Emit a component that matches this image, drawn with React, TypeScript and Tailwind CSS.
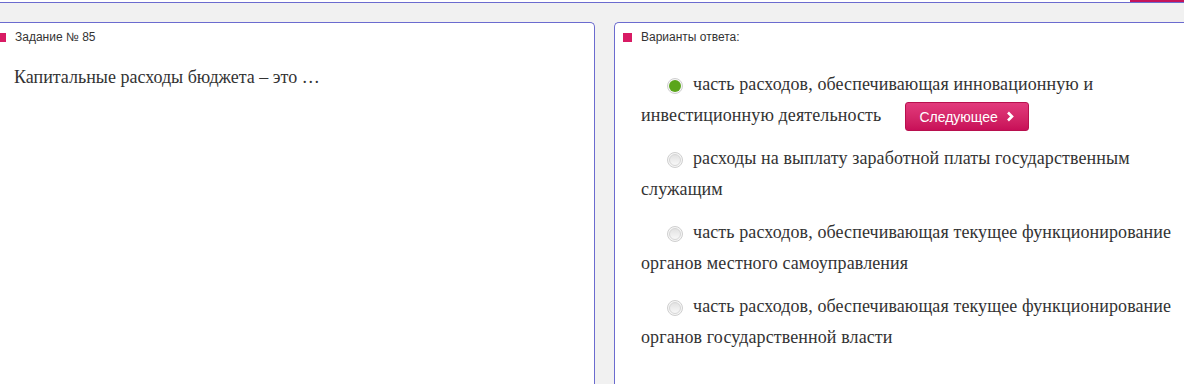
import React from 'react';

const options = [
  { text: 'часть расходов, обеспечивающая инновационную и инвестиционную деятельность', checked: true },
  { text: 'расходы на выплату заработной платы государственным служащим', checked: false },
  { text: 'часть расходов, обеспечивающая текущее функционирование органов местного самоуправления', checked: false },
  { text: 'часть расходов, обеспечивающая текущее функционирование органов государственной власти', checked: false },
];

function Radio({ checked }: { checked: boolean }) {
  return (
    <span className="inline-flex items-center justify-center align-[-2px] w-[16px] h-[16px] rounded-full border border-[#cfcfcf] bg-[#f6f6f6] ml-[26px] mr-[10px]">
      {checked ? (
        <span className="w-[12px] h-[12px] rounded-full bg-[#5aa51a]" />
      ) : (
        <span className="w-[12px] h-[12px] rounded-full bg-gradient-to-b from-[#e2e2e2] to-[#f8f8f8] border border-[#d6d6d6]" />
      )}
    </span>
  );
}

export default function App() {
  return (
    <div className="w-[1184px] h-[384px] overflow-hidden bg-[#f1f1f1] font-['Liberation_Sans',Arial,sans-serif]">
      {/* top strip */}
      <div className="flex h-[3px] border-b border-[#6b6bcf] bg-white">
        <div className="flex-1" />
        <div className="w-[54px] h-[2px] bg-[#c4145a]" />
      </div>
      <div className="h-[19px]" />

      <div className="flex gap-[19px]">
        {/* task panel */}
        <div className="w-[598px] h-[400px] -ml-[3px] shrink-0 bg-white border-t border-r border-[#6b6bcf] rounded-tr-[5px]">
          <div className="flex items-center gap-[9px] h-[28px]">
            <span className="w-[9px] h-[9px] bg-[#d81b64]" />
            <span className="text-[12px] text-[#333]">Задание № 85</span>
          </div>
          <p className="mt-[16px] pl-[17px] font-['Liberation_Serif','Times_New_Roman',serif] text-[18px] leading-[21px] text-[#333]">
            Капитальные расходы бюджета – это …
          </p>
        </div>

        {/* answers panel */}
        <div className="w-[600px] h-[400px] shrink-0 bg-white border-t border-l border-[#6b6bcf] rounded-tl-[5px]">
          <div className="flex items-center gap-[9px] pl-[8px] h-[28px]">
            <span className="w-[9px] h-[9px] bg-[#d81b64]" />
            <span className="text-[12px] text-[#333]">Варианты ответа:</span>
          </div>
          <div className="pt-[18px] pl-[26px] pr-[36px] flex flex-col gap-[12px] font-['Liberation_Serif','Times_New_Roman',serif] text-[18px] leading-[31px] tracking-[0.1px] text-[#333]">
            {options.map((o, i) => (
              <p key={i}>
                <Radio checked={o.checked} />
                {o.text}
                {i === 0 && (
                  <button className="ml-[24px] inline-flex items-center gap-[8px] h-[29px] px-[13px] align-middle rounded-[3px] border border-[#b8104e] bg-gradient-to-b from-[#e23a7c] to-[#c80e58] text-white text-[14px] leading-none tracking-normal font-['Liberation_Sans',Arial,sans-serif]">
                    Следующее
                    <svg width="9" height="11" viewBox="0 0 9 11">
                      <path d="M2 1.5 L6 5.5 L2 9.5" fill="none" stroke="white" strokeWidth="2.6" />
                    </svg>
                  </button>
                )}
              </p>
            ))}
          </div>
        </div>
      </div>
    </div>
  );
}
